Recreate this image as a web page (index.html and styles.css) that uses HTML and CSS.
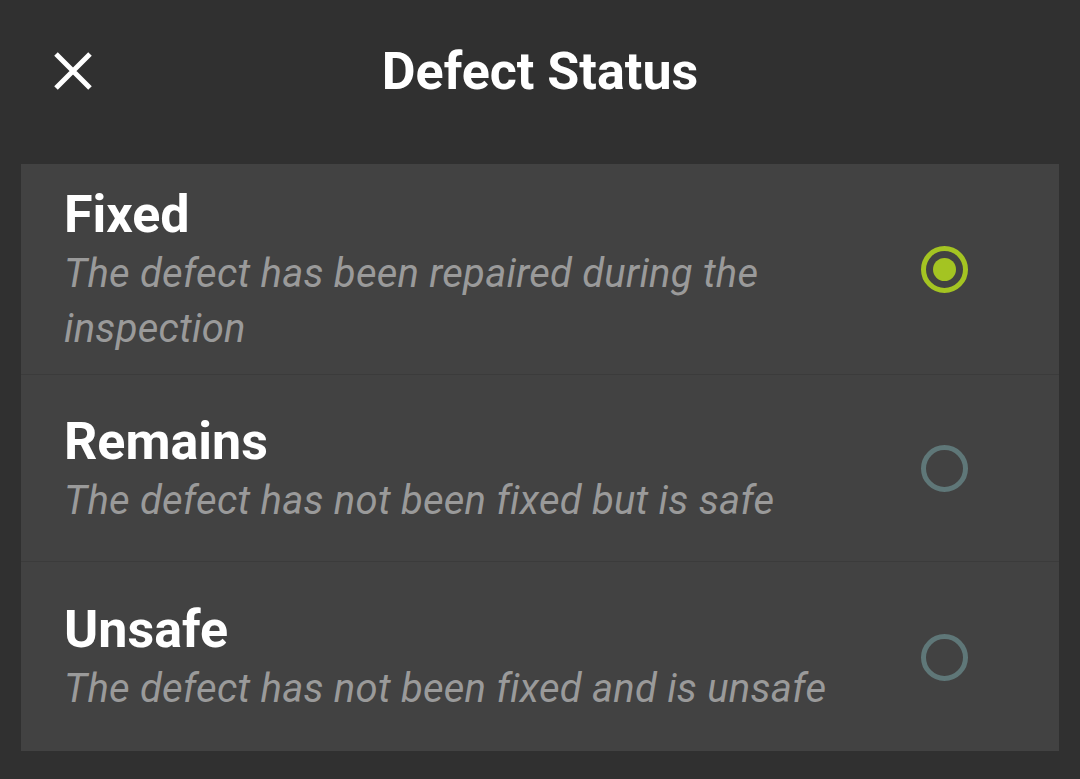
FILE: index.html
```html
<!DOCTYPE html>
<html lang="en">
<head>
<meta charset="utf-8">
<title>Defect Status</title>
<link rel="stylesheet" href="styles.css">
</head>
<body>
<div class="page">
  <header class="toolbar">
    <div class="close">
      <svg width="40" height="40" viewBox="0 0 40 40"><path d="M3 3 L37 37 M37 3 L3 37" stroke="#fff" stroke-width="5" fill="none"/></svg>
    </div>
    <h1 class="title">Defect Status</h1>
    <div></div>
  </header>
  <main class="card">
    <div class="option first">
      <div class="text">
        <div class="name">Fixed</div>
        <div class="desc">The defect has been repaired during the inspection</div>
      </div>
      <span class="radio checked"></span>
    </div>
    <div class="option">
      <div class="text">
        <div class="name">Remains</div>
        <div class="desc">The defect has not been fixed but is safe</div>
      </div>
      <span class="radio"></span>
    </div>
    <div class="option last">
      <div class="text">
        <div class="name">Unsafe</div>
        <div class="desc">The defect has not been fixed and is unsafe</div>
      </div>
      <span class="radio"></span>
    </div>
  </main>
</div>
</body>
</html>
```
FILE: styles.css
```css
html, body {
  margin: 0;
  padding: 0;
  background: #303030;
  font-family: Roboto, "Noto Sans", sans-serif;
}
.page {
  width: 1080px;
  height: 779px;
  padding: 0 21px;
  box-sizing: border-box;
}
.toolbar {
  height: 142px;
  display: grid;
  grid-template-columns: 1fr auto 1fr;
  align-items: center;
  margin: 0 -21px 22px;
}
.close {
  padding-left: 53px;
  display: flex;
  align-items: center;
}
.close svg { display: block; }
.title {
  margin: 0;
  font-size: 52px;
  font-weight: 700;
  color: #fff;
  line-height: 63px;
}
.card {
  background: #424242;
  display: flex;
  flex-direction: column;
}
.option {
  display: flex;
  align-items: center;
  padding: 19px 91px 18px 43px;
  border-bottom: 1px solid #3b3b3b;
}
.option + .option {
  min-height: 187px;
  box-sizing: border-box;
}
.option.last { border-bottom: none; min-height: 189px; }
.text { flex: 1; }
.name {
  font-size: 52px;
  font-weight: 700;
  color: #fff;
  line-height: 63px;
}
.desc {
  font-size: 40px;
  font-style: italic;
  color: #9a9a9a;
  line-height: 55px;
  letter-spacing: 0.25px;
  max-width: 780px;
}
.radio {
  width: 47px;
  height: 47px;
  box-sizing: border-box;
  border-radius: 50%;
  border: 5px solid #5f7778;
  flex: none;
  margin-left: 40px;
  position: relative;
}
.radio.checked {
  border-color: #a4c422;
}
.radio.checked::after {
  content: "";
  position: absolute;
  left: 7px;
  top: 7px;
  width: 23px;
  height: 23px;
  border-radius: 50%;
  background: #a4c422;
}
```
